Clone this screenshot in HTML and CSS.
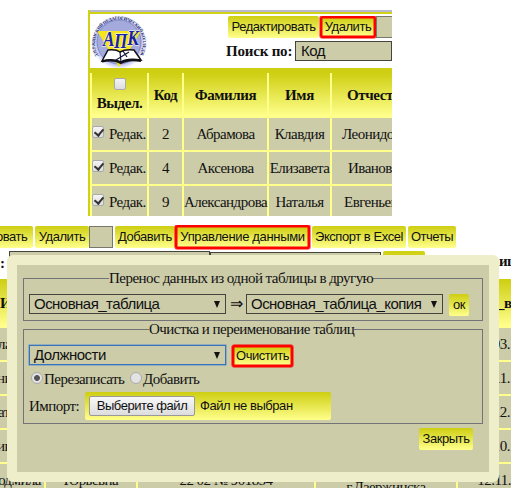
FILE: index.html
```html
<!DOCTYPE html>
<html lang="ru">
<head>
<meta charset="utf-8">
<title>Управление данными</title>
<link rel="stylesheet" href="styles.css">
</head>
<body>
<section class="top">
  <header class="head">
    <svg class="logo" viewBox="0 0 56 54">
      <defs>
        <radialGradient id="glow"><stop offset=".8" stop-color="#b4b9ee"/><stop offset="1" stop-color="#fff"/></radialGradient>
        <path id="ring" d="M7.500 42A24 24 0 1 1 48.500 42"/>
      </defs>
      <circle cx="28" cy="28" r="27" fill="url(#glow)"/>
      <circle cx="28" cy="28" r="22" fill="#a5aadd" stroke="#7078b8" stroke-width=".7"/>
      <path d="M6 17H50L28 53Z" fill="#f5e51c"/>
      <text class="ring"><textPath href="#ring" textLength="100">ДЗЕРЖИНСКИЙ ПЕДАГОГИЧЕСКИЙ КОЛЛЕДЖ</textPath></text>
      <path d="M11 47L17 36Q25 35 29 38Q34 35 43 36L50 46Q36 44 30 48Q22 44 11 47Z" fill="#fff" stroke="#101018" stroke-width="1.500"/>
      <path d="M29 38L30 48M25 46L38 38M32 37L36 43" stroke="#14143c" stroke-width="1.200" fill="none"/>
      <path d="M11 47.500Q22 45 30 49Q37 45 50 47" stroke="#101018" stroke-width="2" fill="none"/>
      <text class="mono" x="12" y="32" textLength="36" lengthAdjust="spacingAndGlyphs">А<tspan dy="2">П</tspan><tspan dy="-3">К</tspan></text>
    </svg>
    <div class="tools">
      <div class="line"><button class="btn edit">Редактировать</button><button class="btn del marked">Удалить</button><span class="blank"></span></div>
      <div class="line search"><b>Поиск по:</b><span class="field">Код</span></div>
    </div>
  </header>
  <div class="grid">
    <div class="th first"><i class="check"></i>Выдел.</div><div class="th">Код</div><div class="th">Фамилия</div><div class="th">Имя</div><div class="th cut">Отчест</div>
    <div class="td pick"><i class="check on"></i>Редак.</div><div class="td">2</div><div class="td">Абрамова</div><div class="td">Клавдия</div><div class="td cut">Леонидо</div>
    <div class="td pick"><i class="check on"></i>Редак.</div><div class="td">4</div><div class="td">Аксенова</div><div class="td">Елизавета</div><div class="td cut mid">Иванов</div>
    <div class="td pick"><i class="check on"></i>Редак.</div><div class="td">9</div><div class="td">Александрова</div><div class="td">Наталья</div><div class="td cut near">Евгеньев</div>
  </div>
</section>
<section class="bottom">
  <div class="bar"><button class="btn b0">овать</button><button class="btn b1">Удалить</button><span class="blank"></span><button class="btn b2">Добавить</button><button class="btn b3 marked">Управление данными</button><button class="btn b4">Экспорт в Excel</button><button class="btn b5">Отчеты</button></div>
  <div class="filter"><b class="colon">:</b><span class="f1"></span><span class="f2"></span><span class="f3"></span><b class="tail">иц</b></div>
  <div class="back">
    <div class="th">И</div><div class="th"></div><div class="th"></div><div class="th"></div><div class="th edge">_вы</div>
    <div class="td a">ла</div><div class="td"></div><div class="td"></div><div class="td"></div><div class="td">03.</div>
    <div class="td b">ни</div><div class="td"></div><div class="td"></div><div class="td"></div><div class="td">11.</div>
    <div class="td a">ат</div><div class="td"></div><div class="td"></div><div class="td"></div><div class="td">12.</div>
    <div class="td b">ик</div><div class="td"></div><div class="td"></div><div class="td"></div><div class="td">10.</div>
    <div class="td name">Людмила</div><div class="td">Юрьевна</div><div class="td">22 02 № 901854</div><div class="td town">г.Дзержинска</div><div class="td date">12.11.</div>
  </div>
  <div class="modal">
    <fieldset class="move">
      <legend>Перенос данных из одной таблицы в другую</legend>
      <div class="line"><span class="select">Основная_таблица<i></i></span><span class="arrow">⇒</span><span class="select">Основная_таблица_копия<i></i></span><button class="btn ok">ок</button></div>
    </fieldset>
    <fieldset class="clear">
      <legend>Очистка и переименование таблиц</legend>
      <div class="line"><span class="select focus">Должности<i></i></span><button class="btn wipe marked">Очистить</button></div>
      <div class="line radios"><i class="radio on"></i><span class="rewrite">Перезаписать</span><i class="radio"></i><span>Добавить</span></div>
      <div class="line import"><span class="lbl">Импорт:</span><span class="file"><span class="choose">Выберите файл</span><span>Файл не выбран</span></span></div>
    </fieldset>
    <button class="btn close">Закрыть</button>
  </div>
</section>
</body>
</html>
```
FILE: styles.css
```css
* { box-sizing: border-box; }
body { margin: 0; width: 511px; height: 488px; overflow: hidden; background: #fff; color: #111; font: 15px/18px "Liberation Serif", serif; letter-spacing: -.53px; }
i { font-style: normal; }
.line { display: flex; }
.top { width: 304px; height: 206px; margin: 10px 0 0 88px; overflow: hidden; border-left: 2px solid #d1d116; background: #fff; }
.head { display: flex; height: 58px; border-top: 2px solid #b9b9ce; position: relative; }
.head::before { content: ""; position: absolute; left: 0; right: 0; top: 0; height: 2px; background: #d1d116; }
.logo { width: 56px; height: 54px; margin: 2px 0 0 1px; flex: none; letter-spacing: 0; }
.ring { font: bold 4.500px "Liberation Serif", serif; fill: #222a70; }
.mono { font: italic bold 20px "Liberation Serif", serif; fill: #1623a8; stroke: #fff; stroke-width: .8px; paint-order: stroke; }
.tools { margin: 4px 0 0 78px; padding-left: 3px; width: 167px; overflow: hidden; flex: none; }
.btn { flex: none; border: 0; padding: 0; margin: 0; height: 22px; border-radius: 2px; background: linear-gradient(#cece12, #ffff8c); color: #111; font: 13px/22px "Liberation Sans", sans-serif; letter-spacing: -.45px; text-align: center; white-space: nowrap; }
.blank { flex: none; width: 24px; height: 22px; background: #cccca9; border: 1px solid #77776b; }
.edit { width: 91px; }
.del { width: 56px; margin-left: 1px; }
.search { margin-top: 3px; height: 20px; line-height: 20px; }
.search b { width: 66px; margin-left: -2px; white-space: nowrap; letter-spacing: -.2px; }
.field { margin-left: 3px; width: 120px; border: 1px solid #44443c; background: #cccca9; font: 15px/18px "Liberation Sans", sans-serif; padding-left: 5px; }
.grid { display: grid; grid-template-columns: 55px 33px 83px 61px 60px; grid-template-rows: 43px 32px 32px 32px; gap: 2px; padding: 5px 0 0 2px; background: linear-gradient(#cece12 0 5px, #ffff8c 5px); }
.th { display: flex; align-items: center; justify-content: center; font-weight: bold; background: linear-gradient(#cece12, #ffff8c); white-space: nowrap; letter-spacing: -.4px; }
.first { flex-direction: column; line-height: 18px; }
.td { display: flex; align-items: center; justify-content: center; background: #cccca9; white-space: nowrap; }
.check { width: 12px; height: 12px; border: 1px solid #aaa; border-radius: 2px; background: linear-gradient(#f4f4f4, #ddd); margin-bottom: 4px; flex: none; position: relative; }
.pick { justify-content: flex-start; }
.pick .check { margin: 0 5px 4px 0; }
.on.check::after { content: ""; position: absolute; left: 3px; top: 0; width: 4px; height: 7px; border: solid #333; border-width: 0 2px 2px 0; transform: rotate(40deg); }
.cut { justify-content: flex-start; padding-left: 10px; }
.th.cut { padding-left: 15px; }
.cut.mid { padding-left: 16px; }
.cut.near { padding-left: 12px; }
.bottom { position: relative; margin-top: 9px; height: 263px; overflow: hidden; }
.bar { display: flex; padding-top: 1px; height: 23px; }
.b0 { width: 33px; text-align: left; text-indent: -4px; border-radius: 0 2px 2px 0; }
.b1 { width: 54px; margin-left: 2px; }
.b2 { width: 60px; margin-left: 2px; }
.marked { border: 2px solid #f00; box-shadow: 0 0 0 .5px #f00, inset 0 0 0 .5px #f00; line-height: 18px; }
.b3 { width: 135px; height: 24px; margin-top: -1px; line-height: 20px; letter-spacing: -.35px; }
.b4 { width: 94px; margin-left: 2px; }
.b5 { width: 48px; margin-left: 2px; }
.filter { display: flex; height: 31px; padding-top: 3px; }
.colon { flex: none; width: 9px; padding-top: 3px; }
.f1, .f2 { flex: none; border: 1px solid #44443c; background: #cccca9; height: 20px; width: 201px; }
.f2 { width: 171px; margin-top: 1px; }
.f3 { flex: none; background: #d1d116; width: 42px; height: 22px; margin-left: 2px; border-radius: 2px; }
.tail { margin-left: 74px; padding-top: 1px; white-space: nowrap; }
.back { display: grid; grid-template-columns: 44px 90px 176px 140px 53px; gap: 2px; grid-template-rows: 47px 32px 32px 32px 32px 32px; background: #ffff8c; }
.back > :nth-child(5n+1) { justify-content: flex-start; }
.back > :nth-child(5n) { justify-content: flex-end; padding-right: 1px; }
.back > .edge { justify-content: flex-start; padding-left: 39px; }
.back .a { text-indent: -2px; }
.back .b { text-indent: -3px; }
.back > .name { justify-content: flex-end; padding-right: 3px; }
.back .town { padding: 14px 0 0; }
.back > .date { padding-right: 0; }
.modal { position: absolute; left: 7px; top: 30px; width: 492px; height: 227px; border: 10px solid #eeeeca; border-radius: 6px; background: #cccca9; padding: 4px 6px; }
fieldset { margin: 0; border: 1px solid #737378; padding: 0 5px; width: 460px; height: 52px; min-width: 0; }
legend { margin: 0 auto 0 80px; padding: 0; height: 18px; white-space: nowrap; }
.clear legend { margin-left: 120px; }
.move .line { margin-top: 7px; }
.clear { height: 104px; margin-top: -1px; }
.clear .line:first-of-type { margin-top: 7px; }
.select { flex: none; display: flex; justify-content: space-between; align-items: center; width: 197px; height: 20px; border: 1px solid #44443c; padding: 0 5px 0 4px; font: 15px/18px "Liberation Sans", sans-serif; white-space: nowrap; }
.select i { border: solid transparent; border-width: 7px 3px 0; border-top-color: #111; }
.focus { border-color: #3872bc; box-shadow: 0 0 0 .5px #5c8fcc; }
.arrow { width: 20px; text-align: center; line-height: 20px; font-size: 16px; }
.ok { width: 20px; margin-left: 6px; }
.wipe { width: 61px; margin-left: 6px; }
.radios { align-items: center; margin-top: 2px; height: 20px; }
.radio { width: 12px; height: 12px; border-radius: 50%; border: 1px solid #aaa; background: #e3e3e3; margin: 0 1px 3px 2px; flex: none; }
.radio.on { background: radial-gradient(circle, #555 0 2.500px, #e3e3e3 3.300px); }
.rewrite { width: 84px; }
.import { margin-top: 3px; line-height: 28px; }
.lbl { width: 56px; }
.file { display: flex; align-items: center; width: 246px; height: 28px; padding-left: 4px; background: linear-gradient(#cece12, #ffff8c); border-radius: 2px; font: 13px/18px "Liberation Sans", sans-serif; letter-spacing: -.45px; }
.choose { width: 106px; height: 20px; margin-right: 5px; text-align: center; border: 1px solid #999; border-radius: 2px; background: linear-gradient(#f8f8f8, #ddd); }
.close { display: block; width: 54px; margin: 4px 0 0 396px; }
```
